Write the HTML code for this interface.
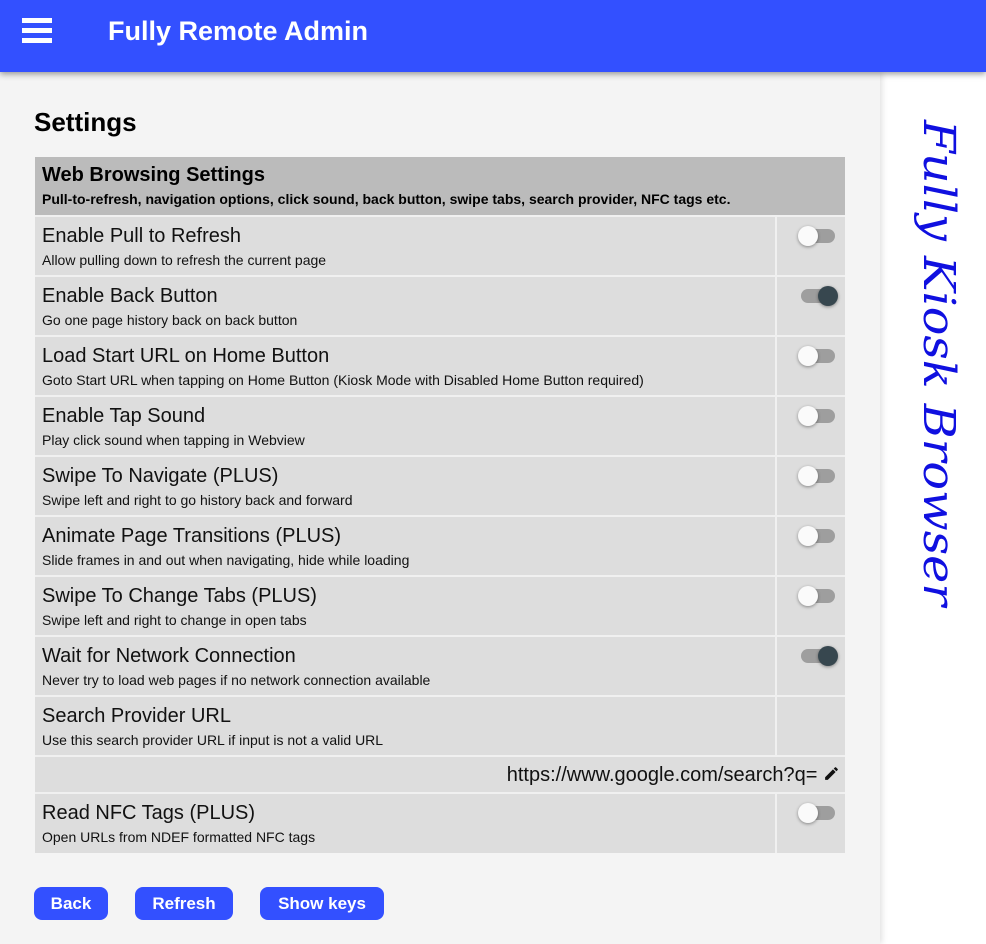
<!DOCTYPE html>
<html><head><meta charset="utf-8"><style>
*{box-sizing:border-box;margin:0;padding:0}
body{width:986px;height:944px;overflow:hidden;font-family:"Liberation Sans",Arial,sans-serif;background:#fff;position:relative}
.hdr{position:absolute;left:0;top:0;width:986px;height:72px;background:#3350ff;box-shadow:0 2px 6px rgba(0,0,0,.4);z-index:2}
.hdr .bars{position:absolute;left:22px;top:18px;width:30px}
.hdr .bars i{display:block;height:5px;background:#fff;margin-bottom:5px}
.hdr h1{position:absolute;left:108px;top:16px;color:#fff;font-size:27px;font-weight:bold}
.main{position:absolute;left:0;top:72px;width:880px;height:872px;background:#f4f4f4;box-shadow:2px 0 6px rgba(0,0,0,.12)}
h2{position:absolute;left:34px;top:35px;font-size:26px;font-weight:bold;color:#000}
.tbl{position:absolute;left:35px;top:85px;width:810px}
.th{height:58px;background:#bbb;padding:7px 7px}
.th b{display:block;font-size:20px}
.th small{display:block;font-size:14px;font-weight:bold;margin-top:4px}
.row{display:flex;height:60px;border-top:2px solid #f0f0f0}
.row .l{flex:1;background:#ddd;padding:8px 7px 0;border-right:2px solid #f0f0f0}
.row .r{width:68px;background:#ddd;position:relative}
.l .t{font-size:20px;color:#111}
.l .d{font-size:14px;color:#111;margin-top:4px}
.sw{position:absolute;left:24px;top:12px;width:34px;height:14px;border-radius:7px;background:#9e9e9e}
.sw::after{content:"";position:absolute;top:-3px;left:-3px;width:20px;height:20px;border-radius:50%;background:#fafafa;box-shadow:0 1px 3px rgba(0,0,0,.4)}
.sw.on::after{left:17px;background:#37474f}
.url{height:37px;border-top:2px solid #f0f0f0;background:#ddd;text-align:right;padding:7px 5px 0 0;font-size:20px;color:#111}
.btn{position:absolute;top:815px;height:33px;background:#3350ff;color:#fff;font-weight:bold;font-size:17px;border-radius:8px;text-align:center;line-height:34px}
</style></head><body>
<div class="hdr"><div class="bars"><i></i><i></i><i></i></div><h1>Fully Remote Admin</h1></div>
<div class="main">
<h2>Settings</h2>
<div class="tbl">
<div class="th"><b>Web Browsing Settings</b><small>Pull-to-refresh, navigation options, click sound, back button, swipe tabs, search provider, NFC tags etc.</small></div>
<div class="row"><div class="l"><div class="t">Enable Pull to Refresh</div><div class="d">Allow pulling down to refresh the current page</div></div><div class="r"><div class="sw"></div></div></div>
<div class="row"><div class="l"><div class="t">Enable Back Button</div><div class="d">Go one page history back on back button</div></div><div class="r"><div class="sw on"></div></div></div>
<div class="row"><div class="l"><div class="t">Load Start URL on Home Button</div><div class="d">Goto Start URL when tapping on Home Button (Kiosk Mode with Disabled Home Button required)</div></div><div class="r"><div class="sw"></div></div></div>
<div class="row"><div class="l"><div class="t">Enable Tap Sound</div><div class="d">Play click sound when tapping in Webview</div></div><div class="r"><div class="sw"></div></div></div>
<div class="row"><div class="l"><div class="t">Swipe To Navigate (PLUS)</div><div class="d">Swipe left and right to go history back and forward</div></div><div class="r"><div class="sw"></div></div></div>
<div class="row"><div class="l"><div class="t">Animate Page Transitions (PLUS)</div><div class="d">Slide frames in and out when navigating, hide while loading</div></div><div class="r"><div class="sw"></div></div></div>
<div class="row"><div class="l"><div class="t">Swipe To Change Tabs (PLUS)</div><div class="d">Swipe left and right to change in open tabs</div></div><div class="r"><div class="sw"></div></div></div>
<div class="row"><div class="l"><div class="t">Wait for Network Connection</div><div class="d">Never try to load web pages if no network connection available</div></div><div class="r"><div class="sw on"></div></div></div>
<div class="row"><div class="l"><div class="t">Search Provider URL</div><div class="d">Use this search provider URL if input is not a valid URL</div></div><div class="r"></div></div>
<div class="url">https://www.google.com/search?q= <svg width="17" height="17" viewBox="0 0 24 24" style="vertical-align:-1px"><path d="M3 17.25V21h3.75L17.81 9.94l-3.75-3.75L3 17.25zM20.71 7.04a1 1 0 0 0 0-1.41l-2.34-2.34a1 1 0 0 0-1.41 0l-1.83 1.83 3.75 3.75 1.83-1.83z" fill="#111"/></svg></div>
<div class="row" style="height:61px"><div class="l"><div class="t">Read NFC Tags (PLUS)</div><div class="d">Open URLs from NDEF formatted NFC tags</div></div><div class="r"><div class="sw"></div></div></div>
</div>
<div class="btn" style="left:34px;width:74px">Back</div>
<div class="btn" style="left:135px;width:98px">Refresh</div>
<div class="btn" style="left:260px;width:124px">Show keys</div>
</div>
<svg style="position:absolute;left:880px;top:0" width="106" height="944"><text transform="translate(44,120) rotate(90)" font-family="'URW Chancery L','Z003',cursive,'DejaVu Serif'" font-style="italic" font-size="44" fill="#1010e0" textLength="486" lengthAdjust="spacingAndGlyphs">Fully Kiosk Browser</text></svg>
</body></html>
